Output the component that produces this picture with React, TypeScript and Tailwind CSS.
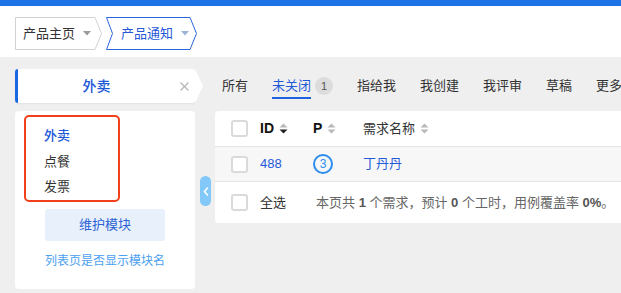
import React from 'react';

const FONT = { fontFamily: '"Liberation Sans", "Noto Sans CJK SC", sans-serif' };

const TABS = [
  { label: '所有' },
  { label: '未关闭', active: true, badge: 1 },
  { label: '指给我' },
  { label: '我创建' },
  { label: '我评审' },
  { label: '草稿' },
  { label: '更多' },
];

const MODULES = [
  { name: '外卖', active: true },
  { name: '点餐' },
  { name: '发票' },
];

const Caret = ({ color }: { color: string }) => (
  <svg width="8" height="5" viewBox="0 0 8 5" className="ml-[8px]">
    <path d="M0 0H8L4 4.5Z" fill={color} />
  </svg>
);

const SortIcon = ({ active }: { active?: boolean }) => (
  <svg width="9" height="11" viewBox="0 0 9 11" className="ml-[5px]">
    <path d="M0.5 4.5L4.5 0.5L8.5 4.5Z" fill="#b9b9b9" />
    <path d="M0.5 6.5L4.5 10.5L8.5 6.5Z" fill={active ? '#222' : '#b9b9b9'} />
  </svg>
);

const Checkbox = () => (
  <div className="w-[17px] h-[17px] rounded-[3px] border-2 border-[#dadada] bg-white" />
);

const Crumb = ({ label, active, first }: { label: string; active?: boolean; first?: boolean }) => {
  const w = first ? 87 : 91;
  const d = first
    ? 'M0.5 0.5H80L86.5 16.5L80 32.5H0.5Z'
    : 'M0.5 0.5H84L90.5 16.5L84 32.5H0.5L6.5 16.5Z';
  return (
    <div className="relative h-[33px] flex items-center" style={{ width: w }}>
      <svg className="absolute inset-0" width={w} height="33" viewBox={`0 0 ${w} 33`}>
        <path d={d} fill="white" stroke={active ? '#2a66dd' : '#d2d2d2'} />
      </svg>
      <div className={`relative flex items-center text-[13px] ${first ? 'pl-[8px]' : 'pl-[15px]'} ${active ? 'text-[#2557d6]' : 'text-[#333]'}`}>
        {label}
        <Caret color={active ? '#9fb3d9' : '#9a9a9a'} />
      </div>
    </div>
  );
};

export default function App() {
  return (
    <div className="w-full h-[293px] bg-[#efefef] overflow-hidden" style={FONT}>
      <div className="h-[6px] bg-[#1d72e6]" />
      <div className="h-[51px] bg-white pt-[11px] pl-[15px] flex gap-[4px] items-start">
        <Crumb label="产品主页" first />
        <Crumb label="产品通知" active />
      </div>

      <div className="flex pt-[12px] pl-[15px]">
        {/* left module column */}
        <div className="w-[180px] shrink-0">
          <div className="relative h-[34px] bg-white rounded-[3px] flex items-center shadow-[0_1px_2px_rgba(0,0,0,0.06)]">
            <div className="w-[3px] h-full bg-[#1d66e2] rounded-l-[3px]" />
            <div className="flex-1 text-center text-[14px] font-medium text-[#2058d8]">外卖</div>
            <svg width="9" height="9" viewBox="0 0 9 9" className="ml-[5px] mr-[6px]">
              <path d="M0.5 0.5L8.5 8.5M8.5 0.5L0.5 8.5" stroke="#b5b5b5" strokeWidth="1.2" />
            </svg>
            <div className="absolute left-full top-0 w-0 h-0 border-y-[17px] border-y-transparent border-l-[8px] border-l-white" />
          </div>

          <div className="mt-[8px] h-[178px] bg-white rounded-[4px] pt-[4px] pl-[9px]">
            <div className="w-[96px] h-[87px] border-[2.5px] border-[#f2401c] rounded-[5px] pl-[18px] pt-[6px] flex flex-col">
              {MODULES.map((m) => (
                <div
                  key={m.name}
                  className={`h-[26px] flex items-center text-[13px] ${m.active ? 'text-[#2058d8] font-medium' : 'text-[#333]'}`}
                >
                  {m.name}
                </div>
              ))}
            </div>
            <div className="mt-[7px] ml-[21px] w-[120px] h-[32px] rounded-[3px] bg-[#e7f0fb] flex items-center justify-center text-[13px] text-[#2b62d6]">
              维护模块
            </div>
            <div className="mt-[11px] ml-[21px] text-[12px] text-[#4ba0ef]">列表页是否显示模块名</div>
          </div>
        </div>

        {/* collapse handle */}
        <div className="w-[20px] shrink-0">
          <div className="mt-[107px] ml-[5px] w-[11px] h-[30px] rounded-[6px] bg-[#82c8f8] flex items-center justify-center">
            <svg width="6" height="9" viewBox="0 0 6 9">
              <path d="M4.5 1L1.5 4.5L4.5 8" fill="none" stroke="white" strokeWidth="1.6" strokeLinecap="round" />
            </svg>
          </div>
        </div>

        {/* right list */}
        <div className="flex-1 min-w-0">
          <div className="h-[34px] pl-[7px] flex items-center gap-[24px] whitespace-nowrap">
            {TABS.map((t) => (
              <div key={t.label} className="relative flex items-center">
                <span className={`relative text-[13px] ${t.active ? 'text-[#1f5ad8]' : 'text-[#333]'}`}>
                  {t.label}
                  {t.active && <span className="absolute left-0 right-0 top-[21px] h-[2px] bg-[#1f63e0]" />}
                </span>
                {t.badge !== undefined && (
                  <span className="ml-[4px] w-[18px] h-[18px] rounded-full bg-[#dcdcdc] text-[11px] text-[#555] flex items-center justify-center">
                    {t.badge}
                  </span>
                )}
              </div>
            ))}
          </div>

          <div className="mt-[8px] bg-white rounded-l-[4px] text-[13px]">
            <div className="h-[36px] flex items-center border-b border-[#e4e4e4]">
              <div className="w-[45px] pl-[16px]"><Checkbox /></div>
              <div className="w-[53px] flex items-center font-bold text-[#111] text-[14px]">ID<SortIcon active /></div>
              <div className="w-[50px] flex items-center font-bold text-[#111] text-[14px]">P<SortIcon /></div>
              <div className="flex items-center text-[#333]">需求名称<SortIcon /></div>
            </div>
            <div className="h-[35px] flex items-center bg-[#f7f7f7] border-b border-[#e4e4e4]">
              <div className="w-[45px] pl-[16px]"><Checkbox /></div>
              <div className="w-[53px] text-[#1f5ad8]">488</div>
              <div className="w-[50px]">
                <div className="w-[20px] h-[20px] rounded-full border-2 border-[#2b8ded] flex items-center justify-center text-[12px] text-[#2b8ded]">3</div>
              </div>
              <div className="text-[#1f5ad8]">丁丹丹</div>
            </div>
            <div className="h-[41px] flex items-center">
              <div className="w-[45px] pl-[16px]"><Checkbox /></div>
              <div className="w-[56px] text-[#333]">全选</div>
              <div className="text-[13px] text-[#666] whitespace-nowrap">
                本页共 <b className="text-[#555]">1</b> 个需求，预计 <b className="text-[#555]">0</b> 个工时，用例覆盖率 <b className="text-[#555]">0%</b>。
              </div>
            </div>
          </div>
        </div>
      </div>
    </div>
  );
}
